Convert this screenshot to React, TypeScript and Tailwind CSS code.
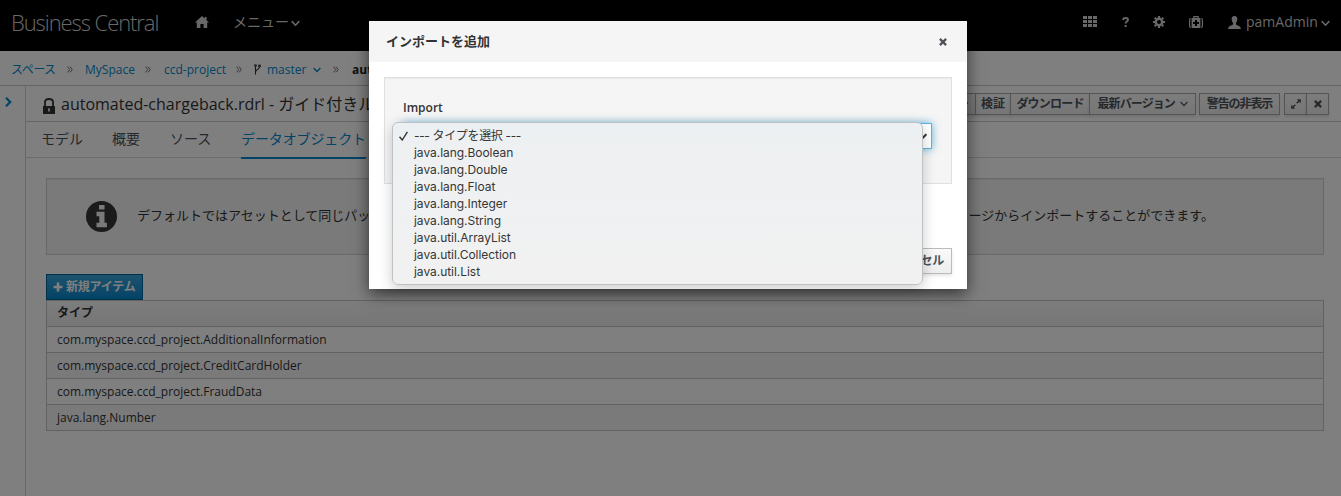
import React from "react";

const latin = "font-['Open_Sans','Noto_Sans_CJK_JP',sans-serif]";

function Chevron({ className = "", width = 8, stroke = 1.4 }: { className?: string; width?: number; stroke?: number }) {
  return (
    <svg className={`shrink-0 ${className}`} width={width} height={(width * 6) / 8} viewBox="0 0 8 6" fill="none" stroke="currentColor" strokeWidth={stroke}>
      <path d="M0.6 1 L4 4.6 L7.4 1" />
    </svg>
  );
}

function Crumb() {
  return (
    <svg className="shrink-0 text-[#707070]" width="6" height="7" viewBox="0 0 6 7" fill="none" stroke="currentColor" strokeWidth="1">
      <path d="M0.5 0.6 L2.8 3.5 L0.5 6.4 M3 0.6 L5.3 3.5 L3 6.4" />
    </svg>
  );
}

function Cross({ size = 9, className = "" }: { size?: number; className?: string }) {
  return (
    <svg className={`shrink-0 ${className}`} width={size} height={size} viewBox="0 0 9 9" fill="none" stroke="currentColor" strokeWidth="2.5">
      <path d="M1 1 L8 8 M8 1 L1 8" />
    </svg>
  );
}

function NavBar() {
  return (
    <header className="flex h-[51px] shrink-0 bg-black text-[#d0d0d0]">
      <div className="ml-[11px] mt-[6px] h-8 w-[184px] whitespace-nowrap text-[22px] font-light leading-8 tracking-[-1.08px]">Business Central</div>
      <svg className="mt-4 shrink-0" width="14" height="12" viewBox="0 0 14 12" fill="currentColor">
        <path d="M7 0 L9.8 2.6 V1 H11.6 V4.2 L14 6.5 H12.2 V12 H8.6 V8 H5.4 V12 H1.8 V6.5 H0 Z" />
      </svg>
      <div className="ml-6 mt-3 flex h-5 w-[72px] items-center text-[14px] leading-5">
        <span className="w-[58px] whitespace-nowrap">メニュー</span>
        <Chevron className="mt-0.5" width={9} />
      </div>
      <div className="ml-auto flex items-start">
        <svg className="mt-4" width="14" height="11" viewBox="0 0 14 11" fill="currentColor">
          <path d="M0 0h4v3H0zM5 0h4v3H5zM10 0h4v3h-4zM0 4h4v3H0zM5 4h4v3H5zM10 4h4v3h-4zM0 8h4v3H0zM5 8h4v3H5zM10 8h4v3h-4z" />
        </svg>
        <svg className="ml-[25px] mt-[17px]" width="7" height="10" viewBox="0 0 7 10" fill="none" stroke="currentColor" strokeWidth="1.9">
          <path d="M0.8 2.8 Q1.5 1 3.5 1 Q6 1 6 2.8 Q6 4 4.7 4.6 Q3.6 5.2 3.6 6.6 M2.6 9 H4.6" />
        </svg>
        <svg className="ml-6 mt-4" width="12" height="12" viewBox="0 0 12 12" fill="none" stroke="currentColor">
          <circle cx="6" cy="6" r="3.2" strokeWidth="2.4" />
          <path strokeWidth="2.2" d="M6 0v2M6 10v2M0 6h2M10 6h2M1.7 1.7l1.4 1.4M8.9 8.9l1.4 1.4M1.7 10.3l1.4-1.4M8.9 3.1l1.4-1.4" />
        </svg>
        <svg className="ml-6 mt-4" width="14" height="12" viewBox="0 0 14 12" fill="none" stroke="currentColor">
          <path strokeWidth="1.2" d="M1.8 2.5 Q0.6 2.5 0.6 4 V10 Q0.6 11.4 1.8 11.4 M12.2 2.5 Q13.4 2.5 13.4 4 V10 Q13.4 11.4 12.2 11.4 M4.8 2.4 V0.6 H9.2 V2.4" />
          <path fill="currentColor" stroke="none" fillRule="evenodd" d="M2.6 2h8.8v10H2.6zM6 4v2H4v2h2v2h2V8h2V6H8V4z" />
        </svg>
        <svg className="ml-[25px] mt-4" width="13" height="13" viewBox="0 0 13 13" fill="currentColor">
          <path d="M6.5 0 C8.6 0 9.5 1.5 9.3 3.4 C9.2 5 8.7 6.1 8 6.8 V8.2 C8.4 9.6 12.9 9.3 12.9 13 H0.1 C0.1 9.3 4.6 9.6 5 8.2 V6.8 C4.3 6.1 3.8 5 3.7 3.4 C3.5 1.5 4.4 0 6.5 0Z" />
        </svg>
        <span className="ml-[5px] mt-3 h-5 w-[75px] whitespace-nowrap text-[14px] leading-5">pamAdmin</span>
        <Chevron className="mr-[11px] mt-5" width={9} />
      </div>
    </header>
  );
}

function Breadcrumbs() {
  return (
    <nav className="flex h-[35px] shrink-0 items-center whitespace-nowrap border-b border-[#c9c9c9] pl-[11px] pt-[3px] text-[12px] leading-5 text-[#0088ce]">
      <span className="w-[56px] tracking-[-0.5px]">スペース</span>
      <Crumb />
      <span className="ml-3 w-[60px]">MySpace</span>
      <Crumb />
      <span className="ml-[13px] w-[72px]">ccd-project</span>
      <Crumb />
      <svg className="ml-3 mr-[6px] shrink-0 text-[#333]" width="7" height="11" viewBox="0 0 7 11" fill="none" stroke="currentColor" strokeWidth="1.1">
        <circle cx="1.5" cy="1.6" r="0.9" />
        <circle cx="5.5" cy="2" r="0.9" />
        <path d="M1.5 2.5 V10.5 M5.5 3 C5.5 5.8 1.5 5 1.5 8.2" />
      </svg>
      <span className="w-[46px]">master</span>
      <Chevron width={8} />
      <span className="ml-3 flex"><Crumb /></span>
      <span className="ml-[13px] font-bold text-[#222]">automated</span>
    </nav>
  );
}

const tool = "flex h-[22px] items-center justify-center border border-[#a8a8a8] bg-linear-to-b from-[#fafafa] to-[#ededed] text-[12px] font-bold leading-[20px] whitespace-nowrap shadow-[0_2px_3px_rgba(3,3,3,0.12)]";

function TitleBar() {
  return (
    <div className="flex h-9 shrink-0 items-start border-b border-[#c9c9c9]">
      <svg className="ml-[17px] mt-3 shrink-0 text-[#333]" width="12" height="17" viewBox="0 0 12 17">
        <path d="M2 8 V4 Q2 1 6 1 Q10 1 10 4 V8" fill="none" stroke="currentColor" strokeWidth="1.8" />
        <path d="M0 8H12V16H0Z M5.2 10.2V13.6H6.8V10.2Z" fill="currentColor" fillRule="evenodd" />
      </svg>
      <h1 className="ml-[6px] mt-[6px] whitespace-nowrap text-[16px] leading-6 text-[#333]">automated-chargeback.rdrl - ガイド付きル</h1>
      <div className="ml-auto mr-3 mt-[7px] flex text-[#4d5258]">
        <div className={`${tool} w-[60px] justify-end pr-[6px]`}>コピー</div>
        <div className={`${tool} -ml-px w-9`}>検証</div>
        <div className={`${tool} -ml-px w-20`}><span className="tracking-[-0.8px]">ダウンロード</span></div>
        <div className={`${tool} -ml-px w-[107px]`}>
          <span className="w-[82px] tracking-[-0.9px]">最新バージョン</span>
          <Chevron width={8} stroke={1.2} />
        </div>
        <div className={`${tool} ml-[3px] w-[81px]`}><span className="tracking-[-1.1px]">警告の非表示</span></div>
        <div className={`${tool} ml-[4px] w-[23px]`}>
          <svg width="10" height="10" viewBox="0 0 10 10" fill="currentColor" stroke="currentColor">
            <path stroke="none" d="M5.8 0.2H9.8V4.2ZM0.2 5.8V9.8H4.2Z" />
            <path d="M8.3 1.7L5.7 4.3M4.3 5.7L1.7 8.3" strokeWidth="1.5" />
          </svg>
        </div>
        <div className={`${tool} -ml-px w-[23px]`}><Cross size={8} /></div>
      </div>
    </div>
  );
}

function Tabs() {
  return (
    <div className="flex h-9 shrink-0 border-b border-[#d9d9d9] pl-[15px] text-[14px] leading-[34px] text-[#4d5258]">
      <div className="w-[71px] whitespace-nowrap">モデル</div>
      <div className="w-[58px] whitespace-nowrap">概要</div>
      <div className="w-[71px] whitespace-nowrap">ソース</div>
      <div className="h-[37px] w-[125px] whitespace-nowrap border-b-2 border-[#0088ce] tracking-[-0.12px] text-[#0088ce]">データオブジェクト</div>
    </div>
  );
}

const types = [
  "com.myspace.ccd_project.AdditionalInformation",
  "com.myspace.ccd_project.CreditCardHolder",
  "com.myspace.ccd_project.FraudData",
  "java.lang.Number",
];

function DataObjects() {
  return (
    <div className="ml-5 mr-[17px] mt-5">
      <div className="flex h-[77px] items-center overflow-hidden border border-[#d1d1d1] bg-[#f5f5f5] pl-[39px] text-[#333] shadow-[inset_0_1px_1px_rgba(0,0,0,0.05)]">
        <svg className="shrink-0" width="31" height="31" viewBox="0 0 31 31">
          <circle cx="15.5" cy="15.5" r="15.5" fill="#363636" />
          <path fill="#f5f5f5" d="M13 4h5.5v4.5H13zM10.5 10.8h8v11h2.4v4.4H10.5v-4.4h2.8v-6.6h-2.8z" />
        </svg>
        <p className="-mt-[4px] ml-5 flex w-[1077px] justify-between whitespace-nowrap text-[13px] leading-5">
          <span>デフォルトではアセットとして同じパッ</span>
          <span>ージからインポートすることができます。</span>
        </p>
      </div>
      <button className="mt-[19px] flex h-[26px] w-[97px] items-center whitespace-nowrap border border-[#00659c] bg-linear-to-b from-[#39a5dc] to-[#0088ce] pl-[6px] text-[12px] font-bold leading-4 text-white">
        <svg className="mr-[3px] shrink-0" width="10" height="10" viewBox="0 0 10 10" stroke="currentColor" strokeWidth="2.6">
          <path d="M5 0.5V9.5M0.5 5H9.5" />
        </svg>
        <span className="tracking-[-0.2px]">新規アイテム</span>
      </button>
      <div className="border border-[#c4c4c4] text-[12px] leading-[25px] text-[#333]">
        <div className="h-[25px] bg-linear-to-b from-[#fafafa] to-[#ededed] pl-[10px] font-bold leading-[23px]">タイプ</div>
        {types.map((t, i) => (
          <div key={t} className={`h-[26px] border-t border-[#c4c4c4] pl-[10px] ${i % 2 ? "bg-[#f5f5f5]" : "bg-white"}`}>{t}</div>
        ))}
      </div>
    </div>
  );
}

const options = [
  "java.lang.Boolean",
  "java.lang.Double",
  "java.lang.Float",
  "java.lang.Integer",
  "java.lang.String",
  "java.util.ArrayList",
  "java.util.Collection",
  "java.util.List",
];

function TypeMenu() {
  return (
    <div className="absolute left-[23px] top-[101px] h-[163px] w-[531px] rounded-[6px] border border-[#bfc2c4] bg-linear-to-b from-[#edf0f2] to-[#f1f1f1] pt-[4px] font-['Inter','Noto_Sans_CJK_JP',sans-serif] text-[12px] leading-[17px] text-[#363636] shadow-[0_4px_14px_rgba(0,0,0,0.2)]">
      <div className="flex h-[17px] items-center whitespace-nowrap">
        <svg className="ml-[6px] mr-[6px] mt-px shrink-0" width="9" height="10" viewBox="0 0 9 10" fill="none" stroke="#333" strokeWidth="1.4">
          <path d="M0.5 5.8L3.2 9L8.4 0.8" />
        </svg>
        <span className="tracking-[-0.35px]">--- タイプを選択 ---</span>
      </div>
      {options.map((o) => (
        <div key={o} className="h-[17px] whitespace-nowrap pl-[21px] tracking-[-0.04px]">{o}</div>
      ))}
    </div>
  );
}

function ImportDialog() {
  return (
    <section className="absolute left-[369px] top-[21px] h-[268px] w-[598px] bg-white text-[#333] shadow-[0_5px_15px_rgba(0,0,0,0.6)]">
      <div className="flex h-[41px] items-center justify-between bg-[#f5f5f5] pl-[17px] pr-5">
        <h2 className="-mt-[2px] text-[13px] font-bold leading-5">インポートを追加</h2>
        <Cross size={8} className="text-[#4d5258]" />
      </div>
      <div className="mx-[15px] mt-[15px] h-[107px] border border-[#e0e0e0] bg-[#f5f5f5] pl-[18px] pr-[19px] pt-5 shadow-[inset_0_1px_1px_rgba(0,0,0,0.05)]">
        <label className="block h-5 text-[12px] font-semibold leading-5">Import</label>
        <div className="mt-[5px] flex h-[26px] items-center justify-end border border-[#5cb3e0] bg-white pr-1 shadow-[0_0_8px_rgba(0,136,206,0.6)]">
          <Chevron width={9} stroke={1.8} />
        </div>
      </div>
      <div className="mr-[15px] mt-16 flex justify-end">
        <button className="h-[26px] w-[82px] whitespace-nowrap border border-[#bbb] bg-linear-to-b from-[#fafafa] to-[#ededed] pr-[7px] text-right text-[12px] font-bold leading-[22px] tracking-[-0.3px] text-[#4d5258] shadow-[0_2px_3px_rgba(3,3,3,0.1)]">キャンセル</button>
      </div>
      <TypeMenu />
    </section>
  );
}

export default function App() {
  return (
    <div className={`relative flex h-[496px] w-[1341px] flex-col overflow-hidden bg-white ${latin}`}>
      <NavBar />
      <Breadcrumbs />
      <div className="flex min-h-0 flex-1">
        <aside className="w-[26px] shrink-0 border-r border-[#d1d1d1] pl-[5px] pt-[11px] text-[#0088ce]">
          <svg width="7" height="10" viewBox="0 0 7 10" fill="none" stroke="currentColor" strokeWidth="2.2">
            <path d="M1 0.8L5.2 5L1 9.2" />
          </svg>
        </aside>
        <main className="flex min-w-0 flex-1 flex-col">
          <TitleBar />
          <Tabs />
          <DataObjects />
        </main>
      </div>
      <div className="absolute inset-0 bg-black/50" />
      <ImportDialog />
    </div>
  );
}
